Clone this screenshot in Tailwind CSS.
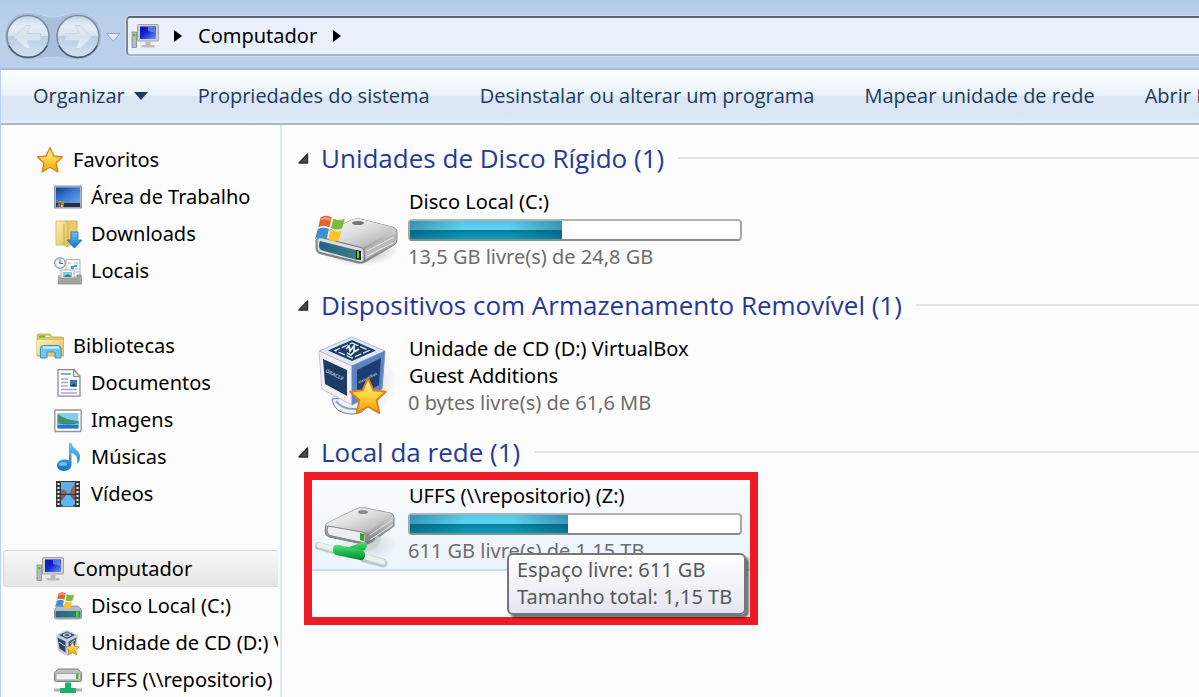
<!DOCTYPE html>
<html lang="pt-BR">
<head>
  <meta charset="UTF-8" />
  <meta name="viewport" content="width=device-width, initial-scale=1.0" />
  <title>Computador</title>
  <script src="https://cdn.jsdelivr.net/npm/@tailwindcss/browser@4"></script>
</head>
<body class="h-screen overflow-hidden flex flex-col bg-[#fcfcfc] text-black text-xl font-['Noto_Sans','Open_Sans',sans-serif]">

  <!-- Shared icons and gradients -->
  <svg class="absolute w-0 h-0" aria-hidden="true">
    <defs>
      <linearGradient id="gNav" x1="0" y1="0" x2="0" y2="1">
        <stop offset="0" stop-color="#c3d5e9"/><stop offset=".25" stop-color="#e4edf6"/><stop offset=".48" stop-color="#d6e3f0"/>
        <stop offset=".5" stop-color="#b8cee4"/><stop offset="1" stop-color="#d3e3f3"/>
      </linearGradient>
      <linearGradient id="gArrow" x1="0" y1="0" x2="0" y2="1">
        <stop offset="0" stop-color="#dde8f2"/><stop offset=".5" stop-color="#d6e2ee"/><stop offset="1" stop-color="#e6eef5"/>
      </linearGradient>
      <linearGradient id="gScreen" x1="0" y1="0" x2="1" y2="1">
        <stop offset="0" stop-color="#0a12a8"/><stop offset=".45" stop-color="#1226d0"/><stop offset="1" stop-color="#6f9cf0"/>
      </linearGradient>
      <linearGradient id="gStar" x1="0" y1="0" x2="0" y2="1">
        <stop offset="0" stop-color="#fff3a0"/><stop offset=".5" stop-color="#ffd33c"/><stop offset="1" stop-color="#f79a10"/>
      </linearGradient>
      <linearGradient id="gDesk" x1="0" y1="0" x2="1" y2="1">
        <stop offset="0" stop-color="#14408e"/><stop offset=".5" stop-color="#3a78d4"/><stop offset="1" stop-color="#6ea4ea"/>
      </linearGradient>
      <linearGradient id="gFolder" x1="0" y1="0" x2="1" y2="1">
        <stop offset="0" stop-color="#fbf0b4"/><stop offset="1" stop-color="#dfbf58"/>
      </linearGradient>
      <linearGradient id="gBlue" x1="0" y1="0" x2="0" y2="1">
        <stop offset="0" stop-color="#6cc4f4"/><stop offset="1" stop-color="#1272c4"/>
      </linearGradient>
      <linearGradient id="gMetal" x1="0" y1="0" x2="1" y2="1">
        <stop offset="0" stop-color="#ffffff"/><stop offset=".5" stop-color="#dcdcdc"/><stop offset="1" stop-color="#a4a4a4"/>
      </linearGradient>
      <linearGradient id="gSide" x1="0" y1="0" x2="0" y2="1">
        <stop offset="0" stop-color="#eeeeee"/><stop offset="1" stop-color="#777777"/>
      </linearGradient>
      <linearGradient id="gTeal" x1="0" y1="0" x2="1" y2="0">
        <stop offset="0" stop-color="#285f86"/><stop offset="1" stop-color="#3a8484"/>
      </linearGradient>
      <linearGradient id="gGreen" x1="0" y1="0" x2="0" y2="1">
        <stop offset="0" stop-color="#5ae07c"/><stop offset=".5" stop-color="#1cbc4a"/><stop offset="1" stop-color="#0a8030"/>
      </linearGradient>
      <radialGradient id="gShadow">
        <stop offset="0" stop-color="#000" stop-opacity=".35"/><stop offset="1" stop-color="#000" stop-opacity="0"/>
      </radialGradient>
    </defs>

    <symbol id="computer" viewBox="0 0 28 28">
      <rect x="1" y="10" width="4.500" height="15.500" fill="#b8bcbc" stroke="#84888a" stroke-width=".8"/>
      <rect x="2" y="12" width="2.500" height="2.500" fill="#36d82c"/>
      <rect x="6.500" y="2.500" width="21" height="16.500" rx="1" fill="#d3d1c9" stroke="#a3a3a0"/>
      <rect x="9" y="4.500" width="16" height="12.500" fill="url(#gScreen)"/>
      <path d="M17 5h7.500v6L17 9z" fill="#7ea6f6" opacity=".6"/>
      <path d="M14.500 19.500h5v3.500h4v2.500h-13V23h4z" fill="#bcbcbc"/>
    </symbol>

    <symbol id="flag" viewBox="0 0 28 24">
      <path d="M5 2Q10 -1 15 2L13 11Q8 8 3 11z" fill="#e8602c"/>
      <path d="M16.500 3Q22 6 27 3L24.500 12Q20 14 14.500 11.500z" fill="#7cbc3c"/>
      <path d="M2.500 12.500Q8 9.500 12.500 12.500L10.500 21.500Q5 19 0 21.500z" fill="#3c90d8"/>
      <path d="M14 13Q19 16 24 13.500L21.500 22.500Q17 25 12 22z" fill="#fcc32c"/>
      <path d="M5.500 3Q10 0 14 3L13.500 5Q9 3 5 5z" fill="#fff" opacity=".35"/>
    </symbol>

    <symbol id="star" viewBox="0 0 28 28">
      <path d="M14 1.500L17.800 10L26.500 11L20 17L22 26L14 21.300L6 26L8 17L1.500 11L10.200 10z" fill="url(#gStar)" stroke="#e07f1c" stroke-width="1.300" stroke-linejoin="round"/>
    </symbol>

    <symbol id="expanded" viewBox="0 0 11 11">
      <path d="M9.500 1v9H1z" fill="#4c4c4c" stroke="#2c2c2c" stroke-width="1.400" stroke-linejoin="round"/>
    </symbol>
  </svg>

  <!-- Address bar -->
  <header class="flex items-center h-[70px] shrink-0 border-b-2 border-[#a5bdd8] bg-linear-to-b from-[#b2cde4] to-[#bad0ea] to-30% pt-1">
    <div class="flex items-center shrink-0 w-[126px]">
      <svg class="w-[126px] h-14" viewBox="0 0 126 56" role="img" aria-label="Voltar e avançar">
        <path d="M28 4C38 4 43 9 53 9S68 4 78 4a24 24 0 0 1 0 48C68 52 63 49 53 49S38 52 28 52a24 24 0 0 1 0-48z" fill="#a9c0da" stroke="#c6d8ec"/>
        <circle cx="28" cy="28.500" r="21" fill="url(#gNav)" stroke="#7c8ca0" stroke-width="1.600"/>
        <circle cx="78" cy="28.500" r="21" fill="url(#gNav)" stroke="#7c8ca0" stroke-width="1.600"/>
        <path d="M9 38a21.500 21.500 0 0 0 38 0M59 38a21.500 21.500 0 0 0 38 0" fill="none" stroke="#48566a" stroke-width="1.600"/>
        <path d="M14 29L26 17.500h4.500L27 25.500h13.500v7H27l3.500 8H26z" fill="url(#gArrow)" stroke="#c3d3e3" stroke-width=".8"/>
        <path d="M92 29L80 17.500h-4.500L79 25.500H65.500v7H79l-3.500 8H80z" fill="url(#gArrow)" stroke="#c3d3e3" stroke-width=".8"/>
        <path d="M106.500 25.500h13.500l-6.700 8z" fill="#dce8f4" stroke="#90a4bc"/>
      </svg>
    </div>
    <nav aria-label="Endereço" class="flex items-center grow h-10 rounded-l-sm border-2 border-r-0 border-t-[#5a6675] border-l-[#7c8896] border-b-[#a5b3c6] bg-[#eaf1fa] pl-[3px] outline outline-[#d2e0f0]">
      <svg class="w-7 h-7" aria-hidden="true"><use href="#computer"/></svg>
      <svg class="w-2 h-3 ml-[15px]" viewBox="0 0 8 12" aria-hidden="true"><path d="M0 0l8 6-8 6z"/></svg>
      <a href="#" class="ml-4">Computador</a>
      <svg class="w-2 h-3 ml-4" viewBox="0 0 8 12" aria-hidden="true"><path d="M0 0l8 6-8 6z"/></svg>
    </nav>
  </header>

  <!-- Command bar -->
  <div class="flex items-center gap-[50px] h-[55px] shrink-0 overflow-hidden whitespace-nowrap pl-8 pb-[2px] border-l border-l-[#bad0ea] border-b-2 border-b-[#a5b8ce] bg-[linear-gradient(#fdfeff,#e9f2fb_48%,#dbe6f4_50%,#dce6f4_92%,#e6f0fa)] text-[#1e395b] font-['Open_Sans',sans-serif]">
    <button class="flex items-center gap-[9px]">Organizar
      <svg class="w-[14px] h-2" viewBox="0 0 14 8" aria-hidden="true"><path d="M0 0h14L7 8z" fill="#1e395b"/></svg>
    </button>
    <button>Propriedades do sistema</button>
    <button>Desinstalar ou alterar um programa</button>
    <button>Mapear unidade de rede</button>
    <button>Abrir Painel de Controle</button>
  </div>

  <div class="flex grow min-h-0">
    <!-- Navigation pane -->
    <nav aria-label="Pastas" class="flex flex-col gap-[38px] w-[282px] shrink-0 whitespace-nowrap border-l border-l-[#bad0ea] border-r-2 border-r-[#dbe7f6] pt-4 pr-[2px]">
      <ul class="shrink-0 overflow-hidden">
        <li><a href="#" class="flex items-center h-[37px] gap-[9px] pl-[35px]">
          <svg class="w-7 h-7 shrink-0" aria-hidden="true"><use href="#star"/></svg>Favoritos</a></li>
        <li><a href="#" class="flex items-center h-[37px] gap-[9px] pl-[53px]">
          <svg class="w-7 h-7 shrink-0" viewBox="0 0 28 28" aria-hidden="true">
            <rect x=".5" y="3" width="27" height="22" fill="#a9b6c8" stroke="#8a97aa"/>
            <rect x="2" y="4.500" width="24" height="15.500" fill="url(#gDesk)"/>
            <rect x="2" y="20" width="24" height="4" fill="#2c3036"/>
            <svg x="3" y="17.500" width="8" height="7" viewBox="0 0 28 24"><use href="#flag"/></svg>
          </svg>Área de Trabalho</a></li>
        <li><a href="#" class="flex items-center h-[37px] gap-[9px] pl-[53px]">
          <svg class="w-7 h-7 shrink-0" viewBox="0 0 28 28" aria-hidden="true">
            <path d="M11 1h12v24H11z" fill="#e6ca6c" stroke="#c8a648" stroke-width=".8"/>
            <path d="M2 1h9l3 2v24l-4-2H2z" fill="url(#gFolder)" stroke="#d0b050" stroke-width=".8"/>
            <path d="M10 4v21" stroke="#c9a94a"/>
            <path d="M17 12h7v8h4l-7.500 8-7.500-8h4z" fill="url(#gBlue)" stroke="#1c70b4" stroke-width=".8"/>
          </svg>Downloads</a></li>
        <li><a href="#" class="flex items-center h-[37px] gap-[9px] pl-[53px]">
          <svg class="w-7 h-7 shrink-0" viewBox="0 0 28 28" aria-hidden="true">
            <path d="M12 2.500h14V20H12z" fill="#f6f6f6" stroke="#b0b0b0"/>
            <path d="M14 6h3M20 6h4M21 12h4M21 15h4" stroke="#b4bcc8"/>
            <rect x="17" y="9" width="3" height="3" fill="#3c9cf0"/><path d="M20 9h3" stroke="#3c9cf0" stroke-width="2"/>
            <path d="M7 13h13v9H7z" fill="#f8fcff" stroke="#a8b0b8"/>
            <rect x="9" y="15" width="9" height="5" fill="#7cc8ee"/><path d="M9 20l5-3 4 3z" fill="#2c8c70"/>
            <path d="M5 18v3h18v-3h4l1 9H4z" fill="#a4a4a4" stroke="#848484" stroke-width=".7"/>
            <circle cx="6" cy="6" r="5.300" fill="#f2f5f7" stroke="#9ca4a8" stroke-width="1.400"/>
            <path d="M6 2.500V6.500h3" fill="none" stroke="#5c6870" stroke-width="1.200"/>
          </svg>Locais</a></li>
      </ul>
      <ul class="shrink-0 overflow-hidden">
        <li><a href="#" class="flex items-center h-[37px] gap-[9px] pl-[35px]">
          <svg class="w-7 h-7 shrink-0" viewBox="0 0 28 28" aria-hidden="true">
            <path d="M1 24V3l2-1h11l2 3h10l2 1v18z" fill="#e0c468" stroke="#c4a64c" stroke-width=".8"/>
            <rect x="3" y="3.500" width="6" height="2" fill="#4cc43c"/><path d="M10 4.500h4" stroke="#fff"/>
            <path d="M1 8h26v15H1z" fill="url(#gFolder)"/>
            <path d="M4.500 26V16.500q0-3 3-3H22q3 0 3 3V26h-6v-6h-8v6z" fill="#74c4e8" stroke="#3c94bc"/>
            <path d="M7 15.500h16" stroke="#d4f0fa" stroke-width="2"/>
          </svg>Bibliotecas</a></li>
        <li><a href="#" class="flex items-center h-[37px] gap-[9px] pl-[53px]">
          <svg class="w-7 h-7 shrink-0" viewBox="0 0 28 28" aria-hidden="true">
            <path d="M4 .7h16l6 6.500v20H4z" fill="#fcfcfc" stroke="#8c8c8c" stroke-width="1.300"/>
            <path d="M19.500 1v6.500H26z" fill="#e4e4e4" stroke="#8c8c8c"/>
            <path d="M7 5h10" stroke="#3c9490" stroke-width="1.300"/>
            <path d="M7 10h7M7 13.500h7M7 17h7M7 20.500h16M7 24h16" stroke="#a4a8d0" stroke-width="1.300"/>
            <rect x="16" y="11" width="7" height="6.500" fill="#3c78bc"/><path d="M16 17.500l4-3 3 3z" fill="#1c4048"/>
          </svg>Documentos</a></li>
        <li><a href="#" class="flex items-center h-[37px] gap-[9px] pl-[53px]">
          <svg class="w-7 h-7 shrink-0" viewBox="0 0 28 28" aria-hidden="true">
            <rect x=".8" y="4" width="26.400" height="21.500" rx="1" fill="#fff" stroke="#949494" stroke-width="1.400"/>
            <rect x="3.500" y="7" width="21" height="15.500" fill="#8cc8f2"/>
            <path d="M3.500 8q8 6 21 7v3h-21z" fill="#3c9470"/>
            <path d="M3.500 17.500h21v5h-21z" fill="#2878c0"/><path d="M3.500 17q10 3 21 0v2h-21z" fill="#6cc0e4"/>
          </svg>Imagens</a></li>
        <li><a href="#" class="flex items-center h-[37px] gap-[9px] pl-[53px]">
          <svg class="w-7 h-7 shrink-0" viewBox="0 0 28 28" aria-hidden="true">
            <path d="M15 0h2.500c.5 5.500 8.500 7 8.500 13 0 4-1 6-3 8 1-6 0-9-5.500-11v11.500c0 8.500-14.500 8.500-14.500 1 0-5.500 7-7.500 12-5z" fill="url(#gBlue)"/>
            <ellipse cx="9" cy="21" rx="4" ry="2" fill="#8cd4f8" opacity=".7"/>
          </svg>Músicas</a></li>
        <li><a href="#" class="flex items-center h-[37px] gap-[9px] pl-[53px]">
          <svg class="w-7 h-7 shrink-0" viewBox="0 0 28 28" aria-hidden="true">
            <path d="M2 1h24v26H2z" fill="#343a3c"/>
            <rect x="7" y="2" width="14" height="11.500" fill="#5cb0ec"/><rect x="7" y="15" width="14" height="11.500" fill="#5cb8f0"/>
            <path d="M7 13.500V9l4 1 3 3.500zM21 3v10.500h-5l1-4z" fill="#a0604c"/>
            <path d="M7 15h5l-2 3-3 3zM21 15h-5l2 3 3 3z" fill="#805460"/><path d="M7 26.500v-3l3 3zM21 26.500v-3l-3 3z" fill="#405c84"/>
            <path d="M4.500 3v24M23.500 3v24" stroke="#f0f4f4" stroke-width="2" stroke-dasharray="2 2"/>
          </svg>Vídeos</a></li>
      </ul>
      <ul class="shrink-0 overflow-hidden">
        <li><a href="#" aria-current="page" class="flex items-center h-[37px] gap-[9px] ml-[2px] pl-8 border border-r-0 border-[#d9d9d9] rounded-l-sm bg-linear-to-b from-[#f8f8f8] to-[#e5e5e5]">
          <svg class="w-7 h-7 shrink-0" aria-hidden="true"><use href="#computer"/></svg>Computador</a></li>
        <li><a href="#" class="flex items-center h-[37px] gap-[9px] pl-[53px]">
          <svg class="w-7 h-7 shrink-0" viewBox="0 0 28 28" aria-hidden="true">
            <path d="M4 14h20l3.500 4v7q0 2-2 2h-23q-2 0-2-2v-7z" fill="#b4bcc0" stroke="#84888c" stroke-width=".8"/>
            <rect x="1.500" y="19" width="25" height="6.500" rx="1" fill="url(#gTeal)"/>
            <rect x="22" y="19.500" width="2.500" height="5" fill="#3ce030"/>
            <svg x="1" y="0" width="20" height="17" viewBox="0 0 28 24"><use href="#flag"/></svg>
          </svg>Disco Local (C:)</a></li>
        <li><a href="#" class="flex items-center h-[37px] gap-[9px] pl-[53px]">
          <svg class="w-7 h-7 shrink-0" viewBox="0 0 28 28" aria-hidden="true">
            <path d="M13 1l11 5-2 16-9 5-9-5L2 6z" fill="#c4cede"/>
            <path d="M13 2.500l8 3.500-8 4-8-4z" fill="#3c5070"/><path d="M9 6l4-2 4 2-4 2z" fill="none" stroke="#dce4f0"/>
            <path d="M3.500 8.500l8 4v11l-6-4z" fill="#2c4468"/><path d="M22.500 8.500l-8 4v11l6-4z" fill="#3c5c8c"/>
            <path d="M5 13l6 4M16 15l5-4" stroke="#c0cce0"/>
            <svg x="11" y="12" width="15" height="15" viewBox="0 0 28 28"><use href="#star"/></svg>
          </svg>Unidade de CD (D:) VirtualBox</a></li>
        <li><a href="#" class="flex items-center h-[37px] gap-[9px] pl-[53px]">
          <svg class="w-7 h-7 shrink-0" viewBox="0 0 28 28" aria-hidden="true">
            <path d="M4 3h20l3.500 4v7q0 1.500-2 1.500h-23q-2 0-2-1.500V7z" fill="#c0c0c0" stroke="#7c7c7c"/>
            <rect x="2" y="7.500" width="24" height="6.500" rx="1" fill="#f0f0f2" stroke="#909090" stroke-width=".8"/>
            <rect x="22" y="8" width="2.500" height="5" fill="#30b828"/>
            <path d="M0 24h28" stroke="#b0b4b4" stroke-width="3"/>
            <path d="M11 16.500h6v5.500h5v5H6v-5h5z" fill="#18b468"/>
          </svg>UFFS (\\repositorio) (Z:)</a></li>
      </ul>
    </nav>

    <!-- Drives -->
    <main class="grow min-w-0 overflow-hidden pt-[15px]">
      <section class="h-[147px]">
        <h2 class="flex items-center h-9 pl-4 text-[26px] leading-[34px] font-['Open_Sans',sans-serif] text-[#26399a]">
          <button class="flex items-center gap-3 shrink-0">
            <svg class="w-[11px] h-[11px]" aria-hidden="true"><use href="#expanded"/></svg>
            Unidades de Disco Rígido (1)
          </button>
          <span class="grow h-[2px] ml-[14px] bg-[#e4e4e4]"></span>
        </h2>
        <div class="flex pl-8 pt-3">
          <svg class="w-[84px] h-16 mt-5 shrink-0" viewBox="0 0 84 64" aria-hidden="true">
            <ellipse cx="46" cy="42" rx="38" ry="16" fill="url(#gShadow)"/>
            <path d="M10 25L38 12q4-2 8-1l32 8q5 1 5 5v8q0 3-3 5L53 53q-4 3-9 2L7 46q-5-1-5-6v-8z" fill="url(#gSide)" stroke="#8a8a8a"/>
            <path d="M10 25L38 12q4-2 8-1l32 8q3 2 0 4L50 39q-3 1-6 0L6 30z" fill="url(#gMetal)"/>
            <path d="M51 41l31-16v8L51 52z" fill="#b9b9b9"/>
            <path d="M53 43l27-14M53 48l26-13" stroke="#e9e9e9"/>
            <path d="M3 31q2-2 6-1l36 9q5 1 5 5v7q0 4-5 3L8 45q-5-1-5-5z" fill="#d8dde0" stroke="#707476"/>
            <path d="M6 33l36 9q4 1 4 4v4q0 2-3 2L10 43q-5-1-5-5 0-4 1-5z" fill="url(#gTeal)"/>
            <path d="M42 42l5 1v9l-5-1z" fill="#102010"/><path d="M43 43l2 .5v7l-2-.5z" fill="#48ec20"/>
            <ellipse cx="44" cy="15" rx="6" ry="2" fill="#70767a"/>
            <svg x="1" y="7" width="31" height="27" viewBox="0 0 28 24"><use href="#flag"/></svg>
          </svg>
          <div class="pl-[10px]">
            <h3 class="pl-px leading-[27px]">Disco Local (C:)</h3>
            <div class="w-[334px] h-[22px] mt-1 border-2 border-t-[#b2b2b2] border-x-[#a6a6a6] border-b-[#8c8c8c] rounded-sm bg-white" role="meter" aria-valuenow="46" aria-valuemin="0" aria-valuemax="100" aria-label="Espaço usado">
              <div class="h-full w-[46%] bg-[linear-gradient(90deg,#00425c66,transparent_35%,transparent_65%,#00425c66),linear-gradient(#4fc8ec,#62d4f2_48%,#087e9c_52%,#0aa0bc)]"></div>
            </div>
            <p class="leading-7 mt-[2px] text-[#6d6d6d]">13,5 GB livre(s) de 24,8 GB</p>
          </div>
        </div>
      </section>

      <section class="h-[147px]">
        <h2 class="flex items-center h-9 pl-4 text-[26px] leading-[34px] font-['Open_Sans',sans-serif] text-[#26399a]">
          <button class="flex items-center gap-3 shrink-0">
            <svg class="w-[11px] h-[11px]" aria-hidden="true"><use href="#expanded"/></svg>
            Dispositivos com Armazenamento Removível (1)
          </button>
          <span class="grow h-[2px] ml-[14px] bg-[#e4e4e4]"></span>
        </h2>
        <div class="flex pl-8 pt-3">
          <svg class="w-[84px] h-[84px] shrink-0" viewBox="0 0 84 84" aria-hidden="true">
            <ellipse cx="46" cy="46" rx="38" ry="36" fill="url(#gShadow)" opacity=".5"/>
            <path d="M18 64q2 15 20 15 10 0 14-6L48 62z" fill="#eef1f8" stroke="#7484a4"/>
            <path d="M22 66q6 9 22 8" fill="none" stroke="#8c9cc0" stroke-width="2"/>
            <path d="M38 2L71 16 38 31 5 16z" fill="#dde7f5" stroke="#9cb0d0" stroke-width=".8"/>
            <path d="M5 16l33 15v39L8 54z" fill="#f3eff6" stroke="#b8b8cc" stroke-width=".8"/>
            <path d="M71 16L38 31v39l30-16z" fill="#5c84c4" stroke="#6c8cc0" stroke-width=".8"/>
            <path d="M38 5l24 10.500L38 26 14 15.500z" fill="#1f3d62"/>
            <path d="M38 8l17 7.500L38 23 21 15.500z" fill="none" stroke="#dfe8f2" stroke-width="1.300" stroke-dasharray="7 2"/>
            <path d="M32 14l3-3 1 5 4-5v6l5-3M33 18l4 2 3-3" fill="none" stroke="#e8f0f8" stroke-width="1.700"/>
            <path d="M9 24l24 11v26L11 49z" fill="#1d3c64"/>
            <path d="M67 23L43 35v27l22-12z" fill="#1e3e70"/>
            <text x="11" y="37" transform="rotate(26 11 37)" fill="#a9bad0" class="text-[5px] font-bold">ORACLE</text>
            <text x="45" y="49" transform="rotate(-27 45 49)" fill="#a9bad0" class="text-[4px] font-bold">VirtualBox</text>
            <svg x="34" y="41" width="40" height="40" viewBox="0 0 28 28"><use href="#star"/></svg>
          </svg>
          <div class="pl-[10px]">
            <h3 class="pl-px leading-[27px]">Unidade de CD (D:) VirtualBox<br>Guest Additions</h3>
            <p class="leading-7 text-[#6d6d6d]">0 bytes livre(s) de 61,6 MB</p>
          </div>
        </div>
      </section>

      <section>
        <h2 class="flex items-center h-9 pl-4 text-[26px] leading-[34px] font-['Open_Sans',sans-serif] text-[#26399a]">
          <button class="flex items-center gap-3 shrink-0">
            <svg class="w-[11px] h-[11px]" aria-hidden="true"><use href="#expanded"/></svg>
            Local da rede (1)
          </button>
          <span class="grow h-[2px] ml-[14px] bg-[#e4e4e4]"></span>
        </h2>
        <div class="relative w-[454px] h-[153px] ml-[22px] mt-[2px] border-8 border-[#ed1c24]">
          <div class="flex h-[91px] pl-[2px] pt-[2px] border-b-2 border-[#c4dcf6] bg-linear-to-b from-[#fafcfe] to-[#ebf3fc]">
            <svg class="w-[84px] h-20 mt-2 shrink-0" viewBox="0 0 84 80" aria-hidden="true">
              <ellipse cx="54" cy="54" rx="30" ry="16" fill="url(#gShadow)" opacity=".4"/>
              <path d="M12 34L42 19q4-2 9-1l25 5q4 1 4 4v9L58 52q-4 3-9 2L15 47q-4-2-4-6z" fill="url(#gSide)" stroke="#808080"/>
              <path d="M13 33L42 19q4-2 9-1l25 5q4 2 1 4L56 41q-3 2-7 1l-36-6q-2-1 0-3z" fill="url(#gMetal)" stroke="#a8a8a8" stroke-width=".6"/>
              <path d="M14 36l34 6q3 1 3 4v7l-33-7q-5-1-5-6z" fill="#efedf4" stroke="#888"/>
              <path d="M56 45l22-15M56 50l22-15" stroke="#e4e4e4"/>
              <path d="M46 43l4 1v7l-4-1z" fill="#2cac18"/>
              <ellipse cx="49" cy="22" rx="5" ry="2" fill="#8c8c8c"/>
              <path d="M50 59q14-3 14-10" fill="none" stroke="#c6d2d0" stroke-width="6" stroke-linecap="round" opacity=".7"/>
              <path d="M35 57l14-5q4 0 4 4l-2 4-13 5z" fill="url(#gGreen)"/>
              <path d="M5 56l18 5" stroke="#bccac7" stroke-width="8" stroke-linecap="round"/>
              <path d="M50 68l19 5" stroke="#bccac7" stroke-width="9" stroke-linecap="round"/>
              <path d="M5 55l18 5M52 67l17 5" stroke="#e9f1f0" stroke-width="5" stroke-linecap="round"/>
              <path d="M20 56q2-2 5-1l23 5q4 2 3 6-1 5-5 4l-24-5q-5-3-2-9z" fill="url(#gGreen)"/>
            </svg>
            <div class="pl-[10px]">
              <h3 class="pl-px leading-[27px]">UFFS (\\repositorio) (Z:)</h3>
              <div class="w-[334px] h-[22px] mt-1 border-2 border-t-[#b2b2b2] border-x-[#a6a6a6] border-b-[#8c8c8c] rounded-sm bg-white" role="meter" aria-valuenow="48" aria-valuemin="0" aria-valuemax="100" aria-label="Espaço usado">
                <div class="h-full w-[48%] bg-[linear-gradient(90deg,#00425c66,transparent_35%,transparent_65%,#00425c66),linear-gradient(#4fc8ec,#62d4f2_48%,#087e9c_52%,#0aa0bc)]"></div>
              </div>
              <p class="leading-7 mt-[2px] text-[#6d6d6d]">611 GB livre(s) de 1,15 TB</p>
            </div>
          </div>
          <div role="tooltip" class="absolute left-[195px] top-[73px] w-[239px] px-2 pt-px pb-[3px] border-2 border-[#767676] rounded-md bg-linear-to-b from-white to-[#e4e5f0] shadow-[3px_3px_2px_#00000088] leading-[27px] text-[#575757] whitespace-nowrap">
            Espaço livre: 611 GB<br>Tamanho total: 1,15 TB
          </div>
        </div>
      </section>
    </main>
  </div>
</body>
</html>
